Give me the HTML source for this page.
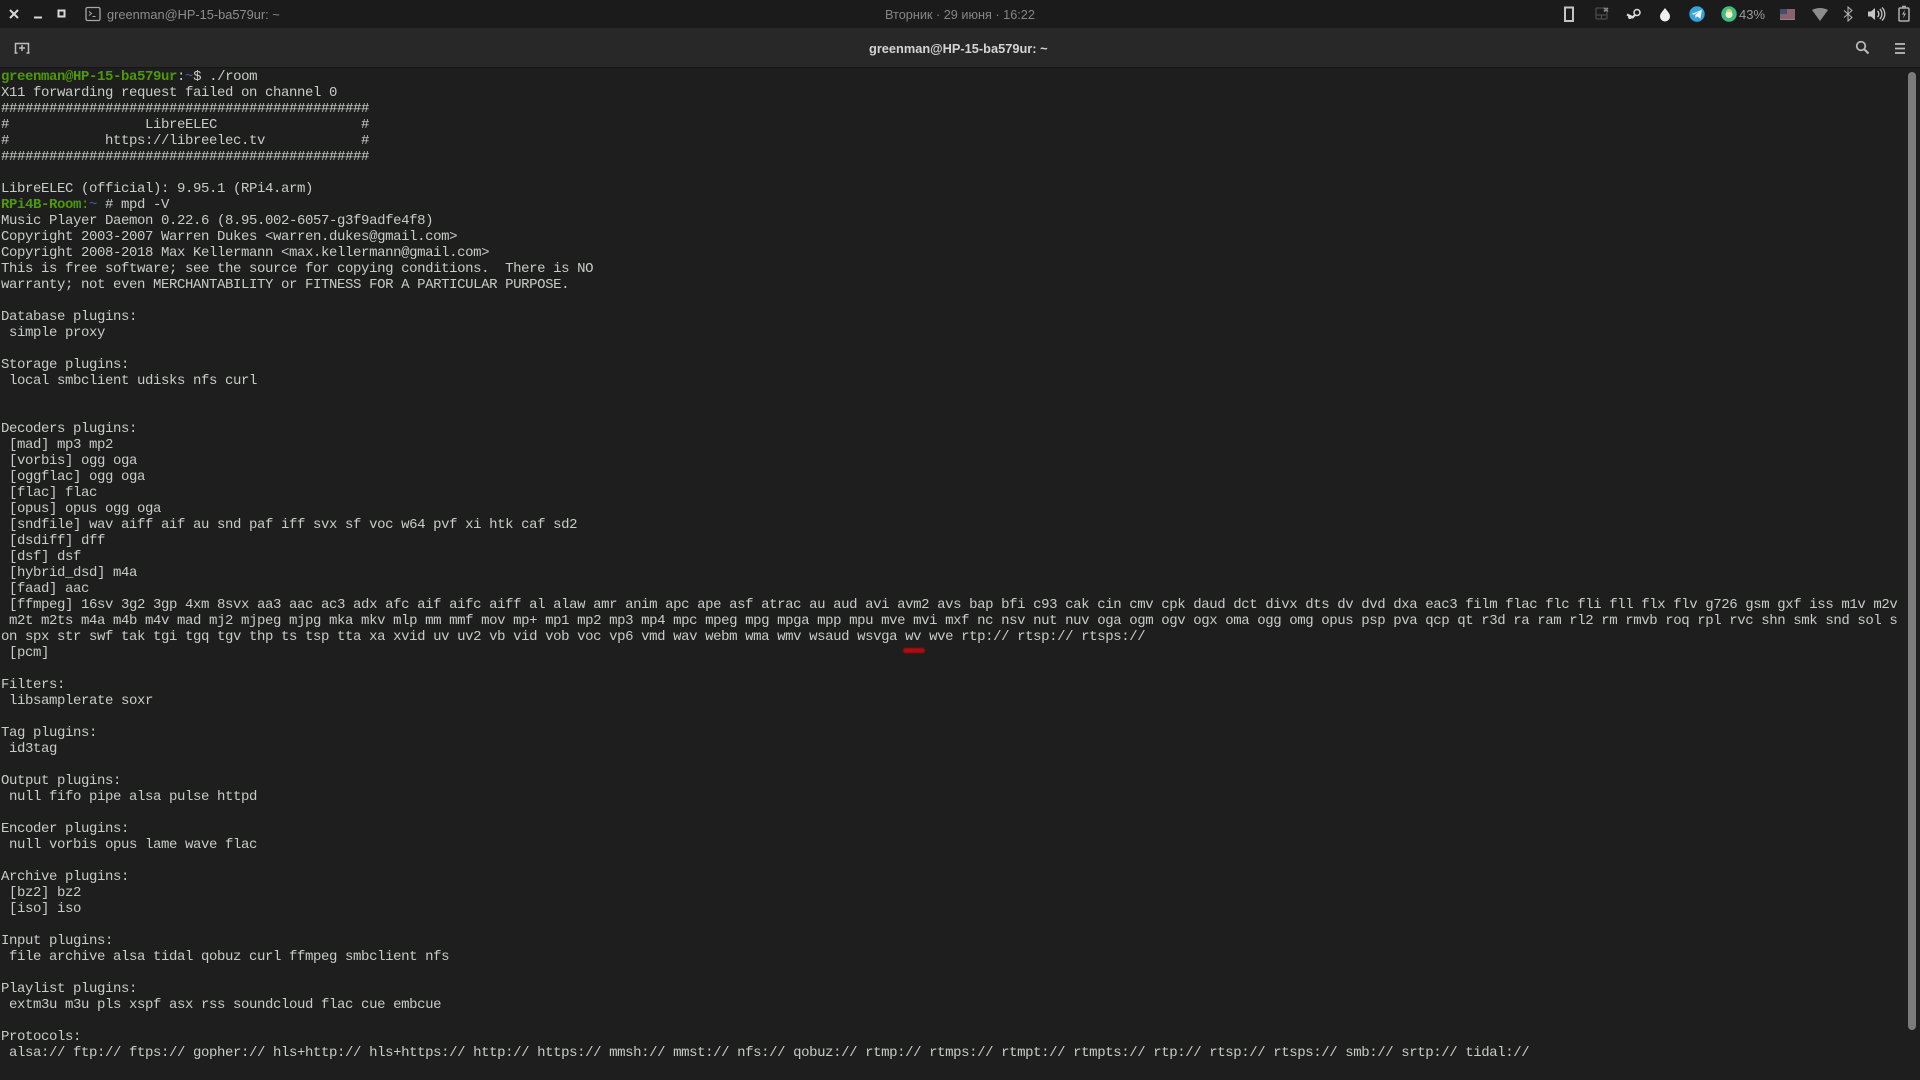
<!DOCTYPE html>
<html><head><meta charset="utf-8"><style>
html,body{margin:0;padding:0;width:1920px;height:1080px;overflow:hidden;background:#1e1e1e}
.abs{position:absolute}
#top{left:0;top:0;width:1920px;height:28px;background:#1b1b1b}
#head{left:0;top:28px;width:1920px;height:40px;background:#282828;border-bottom:1px solid #161616;box-sizing:border-box}
pre{position:absolute;left:1px;top:69px;margin:0;font:14px/16px "Liberation Mono",monospace;letter-spacing:-.4px;color:#c8ccc6;white-space:pre}
b{color:#4e9a06;font-weight:bold}
i{font-style:normal;color:#3465a4}
.ui{font-family:"Liberation Sans",sans-serif;white-space:pre}
</style></head><body>
<div id="top" class="abs"></div>
<div id="head" class="abs"></div>

<svg class="abs" style="left:0;top:0" width="120" height="68" fill="none">
<path d="M10 10l8 8M18 10l-8 8" stroke="#d8d8d8" stroke-width="2"/>
<path d="M34 17.5h8" stroke="#d8d8d8" stroke-width="2"/>
<rect x="58.5" y="10.5" width="6" height="6" stroke="#d8d8d8" stroke-width="2"/>
<rect x="86" y="7.500" width="14" height="13" rx="1.500" stroke="#a8a8a8" stroke-width="1.300"/>
<path d="M89 11.500l2.500 2-2.500 2M92.500 16.500h3" stroke="#a8a8a8"/>
<path d="M15.500 53v-9.500h13V53" stroke="#bdbdbd" stroke-width="1.500"/>
<path d="M22 45v6M19 48h6" stroke="#bdbdbd" stroke-width="1.500"/>
<path d="M14.500 53h3M26.500 53h3" stroke="#bdbdbd" stroke-width="1.500"/>
</svg>
<div class="abs ui" style="left:107px;top:7px;font-size:12.8px;line-height:16px;color:#8d8d8d">greenman@HP-15-ba579ur: ~</div>
<div class="abs ui" style="left:885px;top:7px;font-size:12.7px;line-height:16px;color:#858585">Вторник · 29 июня · 16:22</div>
<div class="abs ui" style="left:869px;top:41px;font-size:12.8px;line-height:16px;font-weight:bold;color:#d4d4d4">greenman@HP-15-ba579ur: ~</div>

<svg class="abs" style="left:1520px;top:0" width="400" height="68" fill="none">
<rect x="45" y="7.500" width="8" height="13.500" stroke="#c4c4c4" stroke-width="2"/>
<rect x="76" y="8" width="11" height="11" rx="1" stroke="#555" stroke-width="1"/><path d="M76 15h11M81.500 15v4" stroke="#555"/>
<path d="M84 8l4 3.500M88 8l-4 3.500" stroke="#888" stroke-width="1.600"/>
<circle cx="117" cy="12.500" r="3" stroke="#ddd" stroke-width="1.500"/>
<path d="M107 14.500l6 3M115 15l-3 3" stroke="#ddd" stroke-width="2.200"/><circle cx="110" cy="17" r="2" fill="#ddd"/>
<path d="M145 8c2.500 3.500 5 5.500 5 8.500a5 5 0 0 1-10 0c0-3 2.500-5 5-8.500z" fill="#efefef"/>
<circle cx="177" cy="14" r="7.700" fill="#35a4dc"/>
<path d="M171.500 14l10.500-4.300-1.600 9-3.200-2.300-1.700 1.600-.3-3 4-3.400-5.200 3z" fill="#f2f2f2"/>
<circle cx="209" cy="14" r="7.700" fill="#3fbd84"/>
<circle cx="209" cy="14.500" r="3.500" fill="#f4f0c8"/><path d="M206 12a3 3 0 0 1 6 0z" fill="#d8d468"/>
<g opacity=".8">
<rect x="260" y="9" width="15" height="11" fill="#a8a0a8"/>
<path d="M260 10h15M260 12h15M260 14h15M260 16h15M260 18h15" stroke="#a84a52" stroke-width="1"/>
<rect x="260" y="9" width="7" height="5" fill="#4f5a84"/>
</g>
<path d="M292 10a17 17 0 0 1 16 0l-8 11z" fill="#8c8c8c"/>
<path d="M324 10.500l8 7-4 3.500V7l4 3.500-8 7" stroke="#b8b8b8" stroke-width="1"/>
<path d="M348 11.500h3l4-3.500v12l-4-3.500h-3z" fill="#c4c4c4"/>
<path d="M357.500 11a4 4 0 0 1 0 6M359.800 9a7 7 0 0 1 0 10M362 7.500a9 9 0 0 1 0 13" stroke="#c4c4c4" stroke-width="1.300"/>
<rect x="379" y="8" width="10" height="13" rx="1" stroke="#b0b0b0" stroke-width="1.500"/>
<path d="M382 6.500h4" stroke="#b0b0b0" stroke-width="1.500"/>
<path d="M385 9.500l-3 5h2l-1 4 3-5h-2z" fill="#b0b0b0"/>
<circle cx="341" cy="46" r="4.300" stroke="#bdbdbd" stroke-width="1.700"/>
<path d="M344.500 49.500l4 4" stroke="#bdbdbd" stroke-width="2"/>
<path d="M375 44h10M375 48.500h10M375 53h10" stroke="#bdbdbd" stroke-width="1.700"/>
</svg>
<div class="abs ui" style="left:1739px;top:7px;font-size:13px;line-height:16px;color:#9a9a9a">43%</div>

<div class="abs" style="left:1908px;top:72px;width:8px;height:958px;border-radius:4px;background:#7b7b7b"></div>
<div class="abs" style="left:903px;top:648px;width:22px;height:5px;border-radius:3px;background:#b00c10;filter:blur(.7px);"></div>

<pre><b>greenman@HP-15-ba579ur</b>:<i>~</i>$ ./room
X11 forwarding request failed on channel 0
##############################################
#                 LibreELEC                  #
#            https://libreelec.tv            #
##############################################

LibreELEC (official): 9.95.1 (RPi4.arm)
<b>RPi4B-Room</b><b style="font-weight:normal">:</b><i>~</i> # mpd -V
Music Player Daemon 0.22.6 (8.95.002-6057-g3f9adfe4f8)
Copyright 2003-2007 Warren Dukes &lt;warren.dukes@gmail.com&gt;
Copyright 2008-2018 Max Kellermann &lt;max.kellermann@gmail.com&gt;
This is free software; see the source for copying conditions.  There is NO
warranty; not even MERCHANTABILITY or FITNESS FOR A PARTICULAR PURPOSE.

Database plugins:
 simple proxy

Storage plugins:
 local smbclient udisks nfs curl


Decoders plugins:
 [mad] mp3 mp2
 [vorbis] ogg oga
 [oggflac] ogg oga
 [flac] flac
 [opus] opus ogg oga
 [sndfile] wav aiff aif au snd paf iff svx sf voc w64 pvf xi htk caf sd2
 [dsdiff] dff
 [dsf] dsf
 [hybrid_dsd] m4a
 [faad] aac
 [ffmpeg] 16sv 3g2 3gp 4xm 8svx aa3 aac ac3 adx afc aif aifc aiff al alaw amr anim apc ape asf atrac au aud avi avm2 avs bap bfi c93 cak cin cmv cpk daud dct divx dts dv dvd dxa eac3 film flac flc fli fll flx flv g726 gsm gxf iss m1v m2v
 m2t m2ts m4a m4b m4v mad mj2 mjpeg mjpg mka mkv mlp mm mmf mov mp+ mp1 mp2 mp3 mp4 mpc mpeg mpg mpga mpp mpu mve mvi mxf nc nsv nut nuv oga ogm ogv ogx oma ogg omg opus psp pva qcp qt r3d ra ram rl2 rm rmvb roq rpl rvc shn smk snd sol s
on spx str swf tak tgi tgq tgv thp ts tsp tta xa xvid uv uv2 vb vid vob voc vp6 vmd wav webm wma wmv wsaud wsvga wv wve rtp:// rtsp:// rtsps://
 [pcm]

Filters:
 libsamplerate soxr

Tag plugins:
 id3tag

Output plugins:
 null fifo pipe alsa pulse httpd

Encoder plugins:
 null vorbis opus lame wave flac

Archive plugins:
 [bz2] bz2
 [iso] iso

Input plugins:
 file archive alsa tidal qobuz curl ffmpeg smbclient nfs

Playlist plugins:
 extm3u m3u pls xspf asx rss soundcloud flac cue embcue

Protocols:
 alsa:// ftp:// ftps:// gopher:// hls+http:// hls+https:// http:// https:// mmsh:// mmst:// nfs:// qobuz:// rtmp:// rtmps:// rtmpt:// rtmpts:// rtp:// rtsp:// rtsps:// smb:// srtp:// tidal://</pre>
</body></html>
